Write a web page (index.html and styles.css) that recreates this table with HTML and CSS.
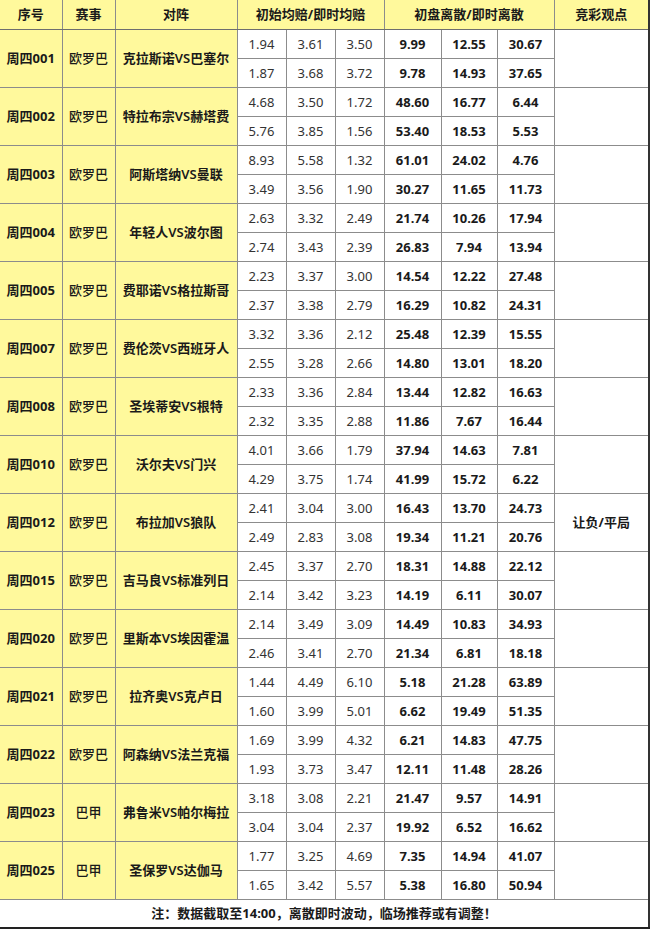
FILE: index.html
```html
<!DOCTYPE html>
<html lang="zh">
<head>
<meta charset="utf-8">
<link rel="stylesheet" href="styles.css">
</head>
<body>
<table class="tbl">
<colgroup>
<col class="c1"><col class="c2"><col class="c3"><col class="co"><col class="co"><col class="co"><col class="cd"><col class="cd2"><col class="cd"><col class="cv">
</colgroup>
<thead>
<tr class="hd"><th>序号</th><th>赛事</th><th>对阵</th><th colspan="3">初始均赔/即时均赔</th><th colspan="3">初盘离散/即时离散</th><th class="hv">竞彩观点</th></tr>
</thead>
<tbody>
<tr class="g"><td rowspan="2" class="y id">周四001</td><td rowspan="2" class="y lg">欧罗巴</td><td rowspan="2" class="y tm">克拉斯诺VS巴塞尔</td><td class="o">1.94</td><td class="o">3.61</td><td class="o">3.50</td><td class="d">9.99</td><td class="d">12.55</td><td class="d">30.67</td><td rowspan="2" class="v"></td></tr>
<tr class="s"><td class="o">1.87</td><td class="o">3.68</td><td class="o">3.72</td><td class="d">9.78</td><td class="d">14.93</td><td class="d">37.65</td></tr>

<tr class="g"><td rowspan="2" class="y id">周四002</td><td rowspan="2" class="y lg">欧罗巴</td><td rowspan="2" class="y tm">特拉布宗VS赫塔费</td><td class="o">4.68</td><td class="o">3.50</td><td class="o">1.72</td><td class="d">48.60</td><td class="d">16.77</td><td class="d">6.44</td><td rowspan="2" class="v"></td></tr>
<tr class="s"><td class="o">5.76</td><td class="o">3.85</td><td class="o">1.56</td><td class="d">53.40</td><td class="d">18.53</td><td class="d">5.53</td></tr>

<tr class="g"><td rowspan="2" class="y id">周四003</td><td rowspan="2" class="y lg">欧罗巴</td><td rowspan="2" class="y tm">阿斯塔纳VS曼联</td><td class="o">8.93</td><td class="o">5.58</td><td class="o">1.32</td><td class="d">61.01</td><td class="d">24.02</td><td class="d">4.76</td><td rowspan="2" class="v"></td></tr>
<tr class="s"><td class="o">3.49</td><td class="o">3.56</td><td class="o">1.90</td><td class="d">30.27</td><td class="d">11.65</td><td class="d">11.73</td></tr>

<tr class="g"><td rowspan="2" class="y id">周四004</td><td rowspan="2" class="y lg">欧罗巴</td><td rowspan="2" class="y tm">年轻人VS波尔图</td><td class="o">2.63</td><td class="o">3.32</td><td class="o">2.49</td><td class="d">21.74</td><td class="d">10.26</td><td class="d">17.94</td><td rowspan="2" class="v"></td></tr>
<tr class="s"><td class="o">2.74</td><td class="o">3.43</td><td class="o">2.39</td><td class="d">26.83</td><td class="d">7.94</td><td class="d">13.94</td></tr>

<tr class="g"><td rowspan="2" class="y id">周四005</td><td rowspan="2" class="y lg">欧罗巴</td><td rowspan="2" class="y tm">费耶诺VS格拉斯哥</td><td class="o">2.23</td><td class="o">3.37</td><td class="o">3.00</td><td class="d">14.54</td><td class="d">12.22</td><td class="d">27.48</td><td rowspan="2" class="v"></td></tr>
<tr class="s"><td class="o">2.37</td><td class="o">3.38</td><td class="o">2.79</td><td class="d">16.29</td><td class="d">10.82</td><td class="d">24.31</td></tr>

<tr class="g"><td rowspan="2" class="y id">周四007</td><td rowspan="2" class="y lg">欧罗巴</td><td rowspan="2" class="y tm">费伦茨VS西班牙人</td><td class="o">3.32</td><td class="o">3.36</td><td class="o">2.12</td><td class="d">25.48</td><td class="d">12.39</td><td class="d">15.55</td><td rowspan="2" class="v"></td></tr>
<tr class="s"><td class="o">2.55</td><td class="o">3.28</td><td class="o">2.66</td><td class="d">14.80</td><td class="d">13.01</td><td class="d">18.20</td></tr>

<tr class="g"><td rowspan="2" class="y id">周四008</td><td rowspan="2" class="y lg">欧罗巴</td><td rowspan="2" class="y tm">圣埃蒂安VS根特</td><td class="o">2.33</td><td class="o">3.36</td><td class="o">2.84</td><td class="d">13.44</td><td class="d">12.82</td><td class="d">16.63</td><td rowspan="2" class="v"></td></tr>
<tr class="s"><td class="o">2.32</td><td class="o">3.35</td><td class="o">2.88</td><td class="d">11.86</td><td class="d">7.67</td><td class="d">16.44</td></tr>

<tr class="g"><td rowspan="2" class="y id">周四010</td><td rowspan="2" class="y lg">欧罗巴</td><td rowspan="2" class="y tm">沃尔夫VS门兴</td><td class="o">4.01</td><td class="o">3.66</td><td class="o">1.79</td><td class="d">37.94</td><td class="d">14.63</td><td class="d">7.81</td><td rowspan="2" class="v"></td></tr>
<tr class="s"><td class="o">4.29</td><td class="o">3.75</td><td class="o">1.74</td><td class="d">41.99</td><td class="d">15.72</td><td class="d">6.22</td></tr>

<tr class="g"><td rowspan="2" class="y id">周四012</td><td rowspan="2" class="y lg">欧罗巴</td><td rowspan="2" class="y tm">布拉加VS狼队</td><td class="o">2.41</td><td class="o">3.04</td><td class="o">3.00</td><td class="d">16.43</td><td class="d">13.70</td><td class="d">24.73</td><td rowspan="2" class="v vt">让负/平局</td></tr>
<tr class="s"><td class="o">2.49</td><td class="o">2.83</td><td class="o">3.08</td><td class="d">19.34</td><td class="d">11.21</td><td class="d">20.76</td></tr>

<tr class="g"><td rowspan="2" class="y id">周四015</td><td rowspan="2" class="y lg">欧罗巴</td><td rowspan="2" class="y tm">吉马良VS标准列日</td><td class="o">2.45</td><td class="o">3.37</td><td class="o">2.70</td><td class="d">18.31</td><td class="d">14.88</td><td class="d">22.12</td><td rowspan="2" class="v"></td></tr>
<tr class="s"><td class="o">2.14</td><td class="o">3.42</td><td class="o">3.23</td><td class="d">14.19</td><td class="d">6.11</td><td class="d">30.07</td></tr>

<tr class="g"><td rowspan="2" class="y id">周四020</td><td rowspan="2" class="y lg">欧罗巴</td><td rowspan="2" class="y tm">里斯本VS埃因霍温</td><td class="o">2.14</td><td class="o">3.49</td><td class="o">3.09</td><td class="d">14.49</td><td class="d">10.83</td><td class="d">34.93</td><td rowspan="2" class="v"></td></tr>
<tr class="s"><td class="o">2.46</td><td class="o">3.41</td><td class="o">2.70</td><td class="d">21.34</td><td class="d">6.81</td><td class="d">18.18</td></tr>

<tr class="g"><td rowspan="2" class="y id">周四021</td><td rowspan="2" class="y lg">欧罗巴</td><td rowspan="2" class="y tm">拉齐奥VS克卢日</td><td class="o">1.44</td><td class="o">4.49</td><td class="o">6.10</td><td class="d">5.18</td><td class="d">21.28</td><td class="d">63.89</td><td rowspan="2" class="v"></td></tr>
<tr class="s"><td class="o">1.60</td><td class="o">3.99</td><td class="o">5.01</td><td class="d">6.62</td><td class="d">19.49</td><td class="d">51.35</td></tr>

<tr class="g"><td rowspan="2" class="y id">周四022</td><td rowspan="2" class="y lg">欧罗巴</td><td rowspan="2" class="y tm">阿森纳VS法兰克福</td><td class="o">1.69</td><td class="o">3.99</td><td class="o">4.32</td><td class="d">6.21</td><td class="d">14.83</td><td class="d">47.75</td><td rowspan="2" class="v"></td></tr>
<tr class="s"><td class="o">1.93</td><td class="o">3.73</td><td class="o">3.47</td><td class="d">12.11</td><td class="d">11.48</td><td class="d">28.26</td></tr>

<tr class="g"><td rowspan="2" class="y id">周四023</td><td rowspan="2" class="y lg">巴甲</td><td rowspan="2" class="y tm">弗鲁米VS帕尔梅拉</td><td class="o">3.18</td><td class="o">3.08</td><td class="o">2.21</td><td class="d">21.47</td><td class="d">9.57</td><td class="d">14.91</td><td rowspan="2" class="v"></td></tr>
<tr class="s"><td class="o">3.04</td><td class="o">3.04</td><td class="o">2.37</td><td class="d">19.92</td><td class="d">6.52</td><td class="d">16.62</td></tr>

<tr class="g"><td rowspan="2" class="y id">周四025</td><td rowspan="2" class="y lg">巴甲</td><td rowspan="2" class="y tm">圣保罗VS达伽马</td><td class="o">1.77</td><td class="o">3.25</td><td class="o">4.69</td><td class="d">7.35</td><td class="d">14.94</td><td class="d">41.07</td><td rowspan="2" class="v"></td></tr>
<tr class="s"><td class="o">1.65</td><td class="o">3.42</td><td class="o">5.57</td><td class="d">5.38</td><td class="d">16.80</td><td class="d">50.94</td></tr>
</tbody>
<tfoot>
<tr class="ft"><td colspan="10">注：数据截取至14:00，离散即时波动，临场推荐或有调整！</td></tr>
</tfoot>
</table>
</body>
</html>
```
FILE: styles.css
```css
html, body {
  margin: 0;
  padding: 0;
  background: #ffffff;
}
body {
  font-family: "Noto Sans", "Noto Sans CJK SC", sans-serif;
  font-size: 13px;
  color: #1a1a1a;
}
.tbl {
  border-collapse: collapse;
  table-layout: fixed;
  width: 649px;
}
.c1 { width: 62px; }
.c2 { width: 53px; }
.c3 { width: 122px; }
.co { width: 49px; }
.cd { width: 57px; }
.cd2 { width: 56px; }
.cv { width: 95px; }
.tbl th,
.tbl td {
  border: 1px solid #8c8c8c;
  padding: 0;
  text-align: center;
  vertical-align: middle;
  white-space: nowrap;
  line-height: 16px;
}
.tbl tr {
  height: 29px;
}
.tbl th:first-child,
.tbl td.id {
  border-left: none;
}
.tbl .hd th {
  background: #fff99c;
  font-weight: bold;
  color: #1a1a1a;
  border-top: none;
  border-bottom: 1px solid #6e6e6e;
}
.tbl th.hv,
.tbl td.v {
  border-right: 2px solid #333;
}
.y {
  background: #fff99c;
}
.id {
  font-weight: bold;
}
.lg {
  font-weight: 500;
}
.tm {
  font-weight: 600;
}
.o {
  color: #333;
}
.d {
  font-weight: bold;
  color: #1a1a1a;
}
.g td {
  border-top: 1px solid #6e6e6e;
}
.s td {
  border-top: 1px solid #a8a8a8;
}
.vt {
  font-weight: bold;
}
.ft td {
  font-weight: bold;
  border-left: none;
  border-right: 2px solid #333;
  border-top: 1px solid #555;
  border-bottom: 2px solid #222;
  background: #ffffff;
}
```
